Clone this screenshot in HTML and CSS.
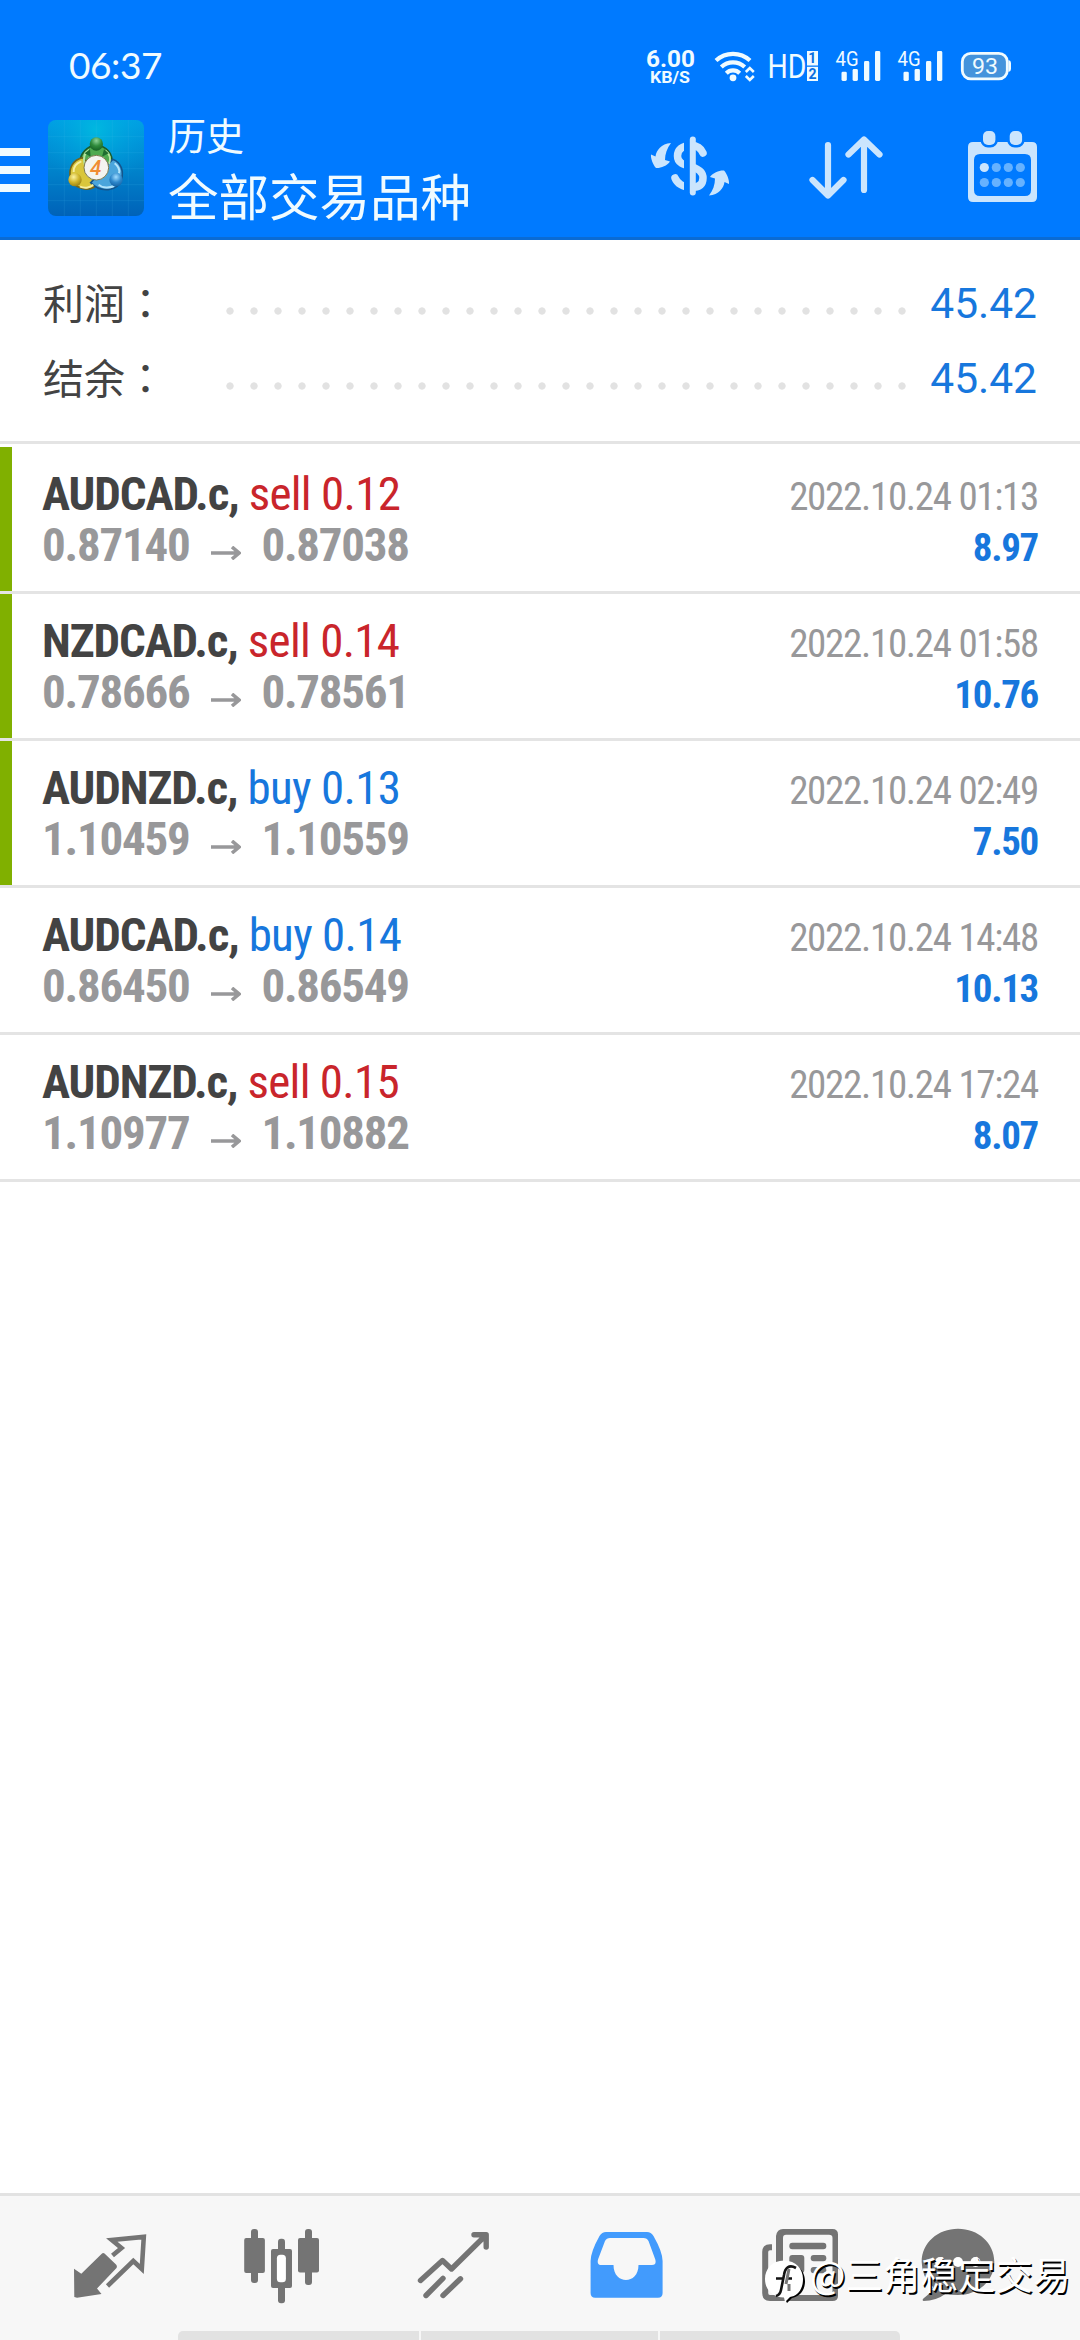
FILE: index.html
```html
<!DOCTYPE html>
<html lang="zh-CN">
<head>
<meta charset="utf-8">
<title>历史</title>
<link rel="stylesheet" href="styles.css">
</head>
<body>
<div class="screen">
  <header class="header">
    <div class="status">
      <span class="clock">06:37</span>
      <svg class="status-icons" width="400" height="50" viewBox="640 40 400 50" fill="#f0fbff">
        <g font-family="Roboto" font-weight="700">
          <text x="646" y="66.6" font-size="24" textLength="49" lengthAdjust="spacingAndGlyphs">6.00</text>
          <text x="650" y="83.2" font-size="17" textLength="40" lengthAdjust="spacingAndGlyphs">KB/S</text>
        </g>
        <g fill="none" stroke="#f0fbff" stroke-width="4.2">
          <path d="M716 60.5A25 25 0 0 1 750 60.5M721.3 67A17 17 0 0 1 744.7 67M726.3 73.2A9.5 9.5 0 0 1 739.7 73.2"/>
          <path stroke-width="2.6" d="M745.8 72L749.8 68L753.8 72M745.8 76L749.8 80L753.8 76"/>
        </g>
        <circle cx="733" cy="77.8" r="3.4"/>
        <text x="767.5" y="78" font-family="Roboto" font-weight="400" font-size="32.5" textLength="39" lengthAdjust="spacingAndGlyphs">HD</text>
        <rect x="807" y="51" width="11" height="14.5"/>
        <rect x="807" y="66.8" width="11" height="14.2"/>
        <g fill="#0a6fe0" font-family="Roboto" font-weight="700" font-size="14">
          <text x="808.3" y="63.2">1</text><text x="808.4" y="79">2</text>
        </g>
        <g id="signal">
          <text x="835.5" y="66" font-family="Roboto" font-size="19.5" textLength="23" lengthAdjust="spacingAndGlyphs">4G</text>
          <rect x="841.5" y="71.7" width="5.3" height="9.3" rx="1.4"/>
          <rect x="852.6" y="69" width="5.3" height="12" rx="1.4"/>
          <rect x="864" y="61" width="5.3" height="20" rx="1.4"/>
          <rect x="875" y="51" width="5.3" height="30" rx="1.4"/>
        </g>
        <use href="#signal" x="62"/>
        <rect x="962.3" y="53.3" width="45" height="25.6" rx="8.5" fill="#4393dc" stroke="#f0fbff" stroke-width="2.8"/>
        <path d="M1008.5 60Q1011 60.500 1011 63V69Q1011 71.500 1008.500 72Z"/>
        <text x="972" y="73.500" font-family="Roboto" font-weight="400" font-size="22" textLength="26" lengthAdjust="spacingAndGlyphs">93</text>
      </svg>
    </div>
    <div class="appbar">
      <div class="menu"><i></i><i></i><i></i></div>
      <svg class="logo" width="96" height="96" viewBox="54 60 288 288">
        <defs>
          <linearGradient id="bg" x1="0" y1="0" x2="0" y2="1"><stop offset="0" stop-color="#00a0e4"/><stop offset=".5" stop-color="#0084cc"/><stop offset="1" stop-color="#0062b8"/></linearGradient>
          <radialGradient id="glow" cx=".5" cy=".1" r=".6"><stop offset="0" stop-color="#00bfe0" stop-opacity=".8"/><stop offset="1" stop-color="#00a0e0" stop-opacity="0"/></radialGradient>
          <radialGradient id="gr" cx=".5" cy=".25" r=".8"><stop offset="0" stop-color="#8fd49a"/><stop offset=".5" stop-color="#2f8b3c"/><stop offset="1" stop-color="#125c22"/></radialGradient>
          <radialGradient id="ye" cx=".4" cy=".3" r=".8"><stop offset="0" stop-color="#fbf3a0"/><stop offset=".5" stop-color="#d0b52c"/><stop offset="1" stop-color="#8c7510"/></radialGradient>
          <radialGradient id="bl" cx=".5" cy=".3" r=".8"><stop offset="0" stop-color="#9fdcff"/><stop offset=".5" stop-color="#2e88cc"/><stop offset="1" stop-color="#0f5a9c"/></radialGradient>
        </defs>
        <rect x="54" y="60" width="288" height="288" rx="24" fill="url(#bg)"/>
        <rect x="54" y="60" width="288" height="288" rx="24" fill="url(#glow)"/>
        <path d="M103 60V348M151 60V348M199 60V348M247 60V348M295 60V348M54 110H342M54 158H342M54 206H342M54 254H342M54 302H342" stroke="#4cc3ee" stroke-opacity=".2" stroke-width="2"/>
        <path d="M180 140C154 154 144 180 154 206L240 214C252 184 248 154 218 140Z" fill="#4faa50" stroke="#1c5c2a" stroke-width="5"/>
        <path d="M158 173C128 180 116 204 121 232C128 262 168 276 192 262L214 240Z" fill="#d9c63c" stroke="#75651a" stroke-width="5"/>
        <path d="M248 178C274 188 282 214 274 240C262 274 212 280 182 248L214 214Z" fill="#4aa5dc" stroke="#14558c" stroke-width="5"/>
        <path d="M164 194C158 170 166 156 178 150M226 152C240 162 243 178 237 192" fill="none" stroke="#b5e3a0" stroke-width="6"/>
        <path d="M154 184C138 190 130 202 131 216M150 260C166 266 182 262 190 254" fill="none" stroke="#f6eea0" stroke-width="6"/>
        <path d="M254 190C266 200 270 210 267 220M206 254C218 266 240 264 252 258" fill="none" stroke="#b2e4fc" stroke-width="6"/>
        <path d="M164 160L182 170L180 148ZM236 160L216 170L222 148Z" fill="#1f6d30"/>
        <circle cx="199" cy="132" r="20" fill="url(#gr)"/>
        <circle cx="135" cy="239" r="20" fill="url(#ye)"/>
        <circle cx="258" cy="239" r="20" fill="url(#bl)"/>
        <circle cx="199" cy="203" r="37" fill="#f4f4f0" stroke="#7d7a50" stroke-width="3"/>
        <text x="197" y="225" text-anchor="middle" font-family="Roboto" font-weight="500" font-style="italic" font-size="62" fill="#f08c34">4</text>
      </svg>
      <div class="titles">
        <div class="subtitle">历史</div>
        <div class="title">全部交易品种</div>
      </div>
      <svg class="actions" width="440" height="100" viewBox="640 120 440 100" fill="#cbe5fd" stroke-linecap="round" stroke-linejoin="round">
        <path d="M703 153C701 148 697 145.500 691 145.500C682 145.500 677.500 150 677.500 156C677.500 163 683 164.500 692 167C699 169 703 172 703 178C703 185 698 187.500 691 187.500C683 187.500 677 183 675 178" fill="none" stroke="#cbe5fd" stroke-width="7.500"/>
        <rect x="684" y="138" width="7" height="56" fill="#007aff"/>
        <path d="M692.800 139.500V192.500" stroke="#cbe5fd" stroke-width="6"/>
        <path id="swap" d="M671 143C661 144 656.500 150 655.500 156.500L651 154.500C650.500 158 653 165 656 168C660 168.500 667 166 670 161.500L665 160C665 154 667 148 671 143Z"/>
        <use href="#swap" transform="rotate(180 690 169.300)"/>
        <path d="M828 145V195M812.500 180L828 195.500L843.500 180M864 190V140M848.500 154.500L864 139.500L879.500 154.500" fill="none" stroke="#cbe5fd" stroke-width="6.200"/>
        <path fill-rule="evenodd" d="M973 142H1032Q1037 142 1037 147V197Q1037 202 1032 202H973Q968 202 968 197V147Q968 142 973 142ZM980 154Q974 154 974 160V190Q974 196 980 196H1025Q1031 196 1031 190V160Q1031 154 1025 154Z"/>
        <g stroke="#007aff" stroke-width="5" paint-order="stroke">
          <rect x="983" y="131" width="12.400" height="14" rx="5"/><rect x="1009.700" y="131" width="12.400" height="14" rx="5"/>
        </g>
        <circle cx="984.300" cy="167.500" r="4.600"/>
        <g fill="#66b2ff">
          <circle cx="996.300" cy="167.500" r="4.600"/><circle cx="1008.300" cy="167.500" r="4.600"/><circle cx="1020.300" cy="167.500" r="4.600"/>
          <circle cx="984.300" cy="182.500" r="4.600"/><circle cx="996.300" cy="182.500" r="4.600"/><circle cx="1008.300" cy="182.500" r="4.600"/><circle cx="1020.300" cy="182.500" r="4.600"/>
        </g>
      </svg>
    </div>
  </header>

  <section class="summary">
    <div class="sum-row"><span class="sum-label">利润<span lang="zh-TW">：</span></span><span class="leader"></span><span class="sum-value">45.42</span></div>
    <div class="sum-row"><span class="sum-label">结余<span lang="zh-TW">：</span></span><span class="leader"></span><span class="sum-value">45.42</span></div>
  </section>

  <main class="deals">
    <article class="deal marked">
      <div class="line"><span class="name"><b>AUDCAD.c,</b> <span class="sell">sell 0.12</span></span><time>2022.10.24 01:13</time></div>
      <div class="line"><span class="prices">0.87140<svg class="arrow" viewBox="0 0 30 14"><path d="M0 7H28M21 1L28 7L21 13"/></svg>0.87038</span><span class="profit">8.97</span></div>
    </article>
    <article class="deal marked">
      <div class="line"><span class="name"><b>NZDCAD.c,</b> <span class="sell">sell 0.14</span></span><time>2022.10.24 01:58</time></div>
      <div class="line"><span class="prices">0.78666<svg class="arrow" viewBox="0 0 30 14"><path d="M0 7H28M21 1L28 7L21 13"/></svg>0.78561</span><span class="profit">10.76</span></div>
    </article>
    <article class="deal marked">
      <div class="line"><span class="name"><b>AUDNZD.c,</b> <span class="buy">buy 0.13</span></span><time>2022.10.24 02:49</time></div>
      <div class="line"><span class="prices">1.10459<svg class="arrow" viewBox="0 0 30 14"><path d="M0 7H28M21 1L28 7L21 13"/></svg>1.10559</span><span class="profit">7.50</span></div>
    </article>
    <article class="deal">
      <div class="line"><span class="name"><b>AUDCAD.c,</b> <span class="buy">buy 0.14</span></span><time>2022.10.24 14:48</time></div>
      <div class="line"><span class="prices">0.86450<svg class="arrow" viewBox="0 0 30 14"><path d="M0 7H28M21 1L28 7L21 13"/></svg>0.86549</span><span class="profit">10.13</span></div>
    </article>
    <article class="deal">
      <div class="line"><span class="name"><b>AUDNZD.c,</b> <span class="sell">sell 0.15</span></span><time>2022.10.24 17:24</time></div>
      <div class="line"><span class="prices">1.10977<svg class="arrow" viewBox="0 0 30 14"><path d="M0 7H28M21 1L28 7L21 13"/></svg>1.10882</span><span class="profit">8.07</span></div>
    </article>
  </main>

  <footer class="footer">
    <nav class="tabs">
      <svg viewBox="24 2196 172 135">
        <path d="M74 2268.700L81.300 2273.700L101.500 2254Q103 2252.500 104.500 2253.500L116 2264.500Q117.500 2266 116.500 2268L97 2288.500L101.500 2294L77 2297.800L74.300 2297Z"/>
        <path class="stroke" stroke-width="4.600" d="M112.500 2255.500L121.500 2248L111.800 2240L143.800 2236.900L141.800 2269L133.300 2261L107.500 2286"/>
      </svg>
      <svg viewBox="196 2196 172 135">
        <rect x="251" y="2229" width="7" height="54" rx="3"/><rect x="244.200" y="2238" width="20.700" height="35" rx="2"/>
        <rect x="278" y="2238.700" width="7" height="64.500" rx="3"/><rect x="271" y="2249" width="21" height="39" rx="2"/><rect x="276.900" y="2254.700" width="9" height="27.500" rx="3.500" fill="#fff"/>
        <rect x="305" y="2229" width="7" height="56" rx="3"/><rect x="298" y="2238" width="21" height="34.500" rx="2"/>
      </svg>
      <svg viewBox="368 2196 172 135">
        <path class="stroke round" stroke-width="5.400" d="M420.500 2280.500L442.500 2260.500L451.500 2269L485.500 2235.500M474 2234.800H486.200V2247M426 2295.500L443 2278.300M443 2295.500L460.500 2278.800"/>
      </svg>
      <svg viewBox="540 2196 172 135">
        <path fill="#429bfd" fill-rule="evenodd" d="M606 2232H647Q651 2232 653.500 2236Q662.600 2252 662.600 2261V2293Q662.600 2297.800 658 2297.800H595.200Q590.600 2297.800 590.600 2293V2261Q590.600 2252 599.500 2236Q602 2232 606 2232ZM610 2238Q606.500 2238 605 2241L598 2259.500Q596.800 2265 600.500 2265H613.500C613.500 2285 638.500 2285 638.500 2265H652Q656.700 2265 655.300 2259.500L648.500 2241Q647 2238 643.500 2238Z"/>
      </svg>
      <svg viewBox="712 2196 172 135">
        <path class="stroke" stroke-width="6" d="M772 2247.300H770Q765.200 2247.300 765.200 2252V2293Q765.200 2298 770 2298H830"/>
        <path fill-rule="evenodd" d="M783 2229H832.500Q838 2229 838 2234.500V2296Q838 2301 832.500 2301H776V2236Q777 2229 783 2229ZM786 2234.700Q783 2234.700 783 2238V2295H829Q832.500 2295 832.500 2291V2238Q832.500 2234.700 829 2234.700Z"/>
        <rect x="789.300" y="2242.700" width="37" height="6.500" rx="3"/><rect x="789.300" y="2255" width="15" height="18" rx="3"/><rect x="810.700" y="2255" width="15.600" height="6.200" rx="3"/><rect x="810.700" y="2267" width="15.600" height="6.200" rx="3"/>
      </svg>
      <svg viewBox="884 2196 172 135">
        <path d="M958 2228.800C978 2228.800 994.300 2243 994.300 2262C994.300 2281 978 2295 958 2295Q951 2295 946 2293.500Q936 2301 923.500 2301Q921.500 2300 924 2298Q931 2293 933 2287Q921.700 2277 921.700 2262C921.700 2243 938 2228.800 958 2228.800Z"/>
        <g fill="#fff"><circle cx="940" cy="2262" r="5"/><circle cx="958" cy="2262" r="5"/><circle cx="975.500" cy="2262" r="5"/></g>
      </svg>
    </nav>
    <div class="handle"><i></i><i></i><i></i></div>
  </footer>

  <div class="watermark">
    <svg width="44" height="48" viewBox="762 2256 44 48">
      <path d="M785 2263C799 2263 805 2272 805 2281C805 2292 798 2297 792 2298L787 2303L785 2299Z" fill="#000"/>
      <path d="M784 2260.500C796 2260.500 803 2269 803 2279C803 2290 797 2296 790 2297L785 2302L784 2297.500C772 2297.500 765 2289 765 2279C765 2269 772 2260.500 784 2260.500Z" fill="#fff"/>
      <path d="M796 2268C789 2264 785 2268 784 2275L781 2290Q780 2295 776 2296M776 2278.500H783M788 2278.500H792" fill="none" stroke="#111" stroke-width="2.600"/>
      <path d="M789 2269L786 2284M789 2284V2291" fill="none" stroke="#777" stroke-width="3"/>
    </svg>
    <span>@三角稳定交易</span>
  </div>
</div>
</body>
</html>
```
FILE: styles.css
```css
* { box-sizing: border-box; }
body { margin: 0; background: #fff; }
.screen {
  position: relative;
  display: flex;
  flex-direction: column;
  width: 1080px;
  height: 2340px;
  overflow: hidden;
  background: #fff;
  font-family: Roboto, "Noto Sans CJK SC", sans-serif;
}
svg { display: block; flex: none; }

.header {
  height: 240px;
  background: #007aff;
  border-bottom: 3px solid #0a6bd4;
  color: #f0fbff;
}
.status {
  display: flex;
  justify-content: space-between;
  align-items: center;
  height: 90px;
  padding: 40px 40px 0 69px;
}
.clock { font: 37px/50px Lato, sans-serif; letter-spacing: -0.4px; }
.appbar {
  display: flex;
  align-items: center;
  height: 147px;
}
.menu { display: flex; flex-direction: column; gap: 10px; width: 30px; margin: 13px 18px 0 0; }
.menu i { height: 8px; background: #f0fbff; }
.logo { margin: 9px 24px 0 0; }
.titles { width: 472px; font-family: "Noto Sans CJK SC", sans-serif; white-space: nowrap; padding-top: 5px; }
.subtitle { font-size: 38px; line-height: 56px; }
.title { font-size: 50.5px; line-height: 64px; }
.actions { margin-top: 13px; }

.summary { height: 204px; padding: 26px 43px 0; border-bottom: 3px solid #e4e4e4; }
.sum-row { display: flex; height: 75px; line-height: 75px; }
.sum-label {
  width: 175px;
  color: #434343;
  font-family: "Noto Sans CJK SC", sans-serif;
  font-size: 41px;
  line-height: 70px;
}
.sum-label span { font-family: "Noto Sans CJK TC", sans-serif; }
.leader {
  width: 696px;
  background: radial-gradient(circle at 12px 45px, #e2e2e2 3.3px, transparent 4px) 0 0 / 24px 75px repeat-x;
}
.sum-value { flex: 1; text-align: right; color: #1777dd; font-size: 42.500px; }

.deals { flex: 1; padding-top: 3px; font-family: "Roboto Condensed", Roboto, sans-serif; }
.deal { height: 147px; padding: 21px 42px 0; border-bottom: 3px solid #e4e4e4; }
.marked { background: linear-gradient(#80b000, #80b000) 0 0 / 12px 144px no-repeat; }
.line { display: flex; justify-content: space-between; align-items: baseline; height: 51px; line-height: 51px; white-space: nowrap; }
.name { font-size: 47px; letter-spacing: -0.7px; color: #434343; }
.name b { letter-spacing: -1.1px; }
.sell { color: #c9252b; }
.buy { color: #1777dd; }
time { font-size: 39px; letter-spacing: -1.3px; color: #98989a; }
.prices { font-size: 47px; font-weight: 700; letter-spacing: -1.25px; color: #98989a; }
.arrow { display: inline-block; width: 30px; height: 14px; margin: 0 20px 1px 22px; fill: none; stroke: #98989a; stroke-width: 3.600; }
.profit { font-size: 39px; font-weight: 700; letter-spacing: -1.3px; color: #1777dd; }

.footer { height: 147px; background: #f7f7f7; border-top: 3px solid #e2e2e2; }
.tabs { display: flex; padding-left: 24px; height: 135px; }
.tabs svg { width: 172px; height: 135px; fill: #747474; }
.tabs .stroke { fill: none; stroke: #747474; }
.tabs .round { stroke-linecap: round; stroke-linejoin: round; }
.handle { display: grid; grid-template-columns: 241px 237px 240px; gap: 2px; width: 722px; height: 9px; margin-left: 178px; border-radius: 5px 5px 0 0; overflow: hidden; }
.handle i { background: #e2e2e2; }

.watermark {
  position: absolute;
  left: 762px;
  top: 2246px;
  display: flex;
  align-items: flex-start;
  gap: 4px;
  color: #fff;
  font: 37.500px/54px "Noto Sans CJK SC", sans-serif;
  text-shadow: 1.500px 1.500px 0 #000;
  white-space: nowrap;
}
.watermark svg { margin-top: 10px; }
```
